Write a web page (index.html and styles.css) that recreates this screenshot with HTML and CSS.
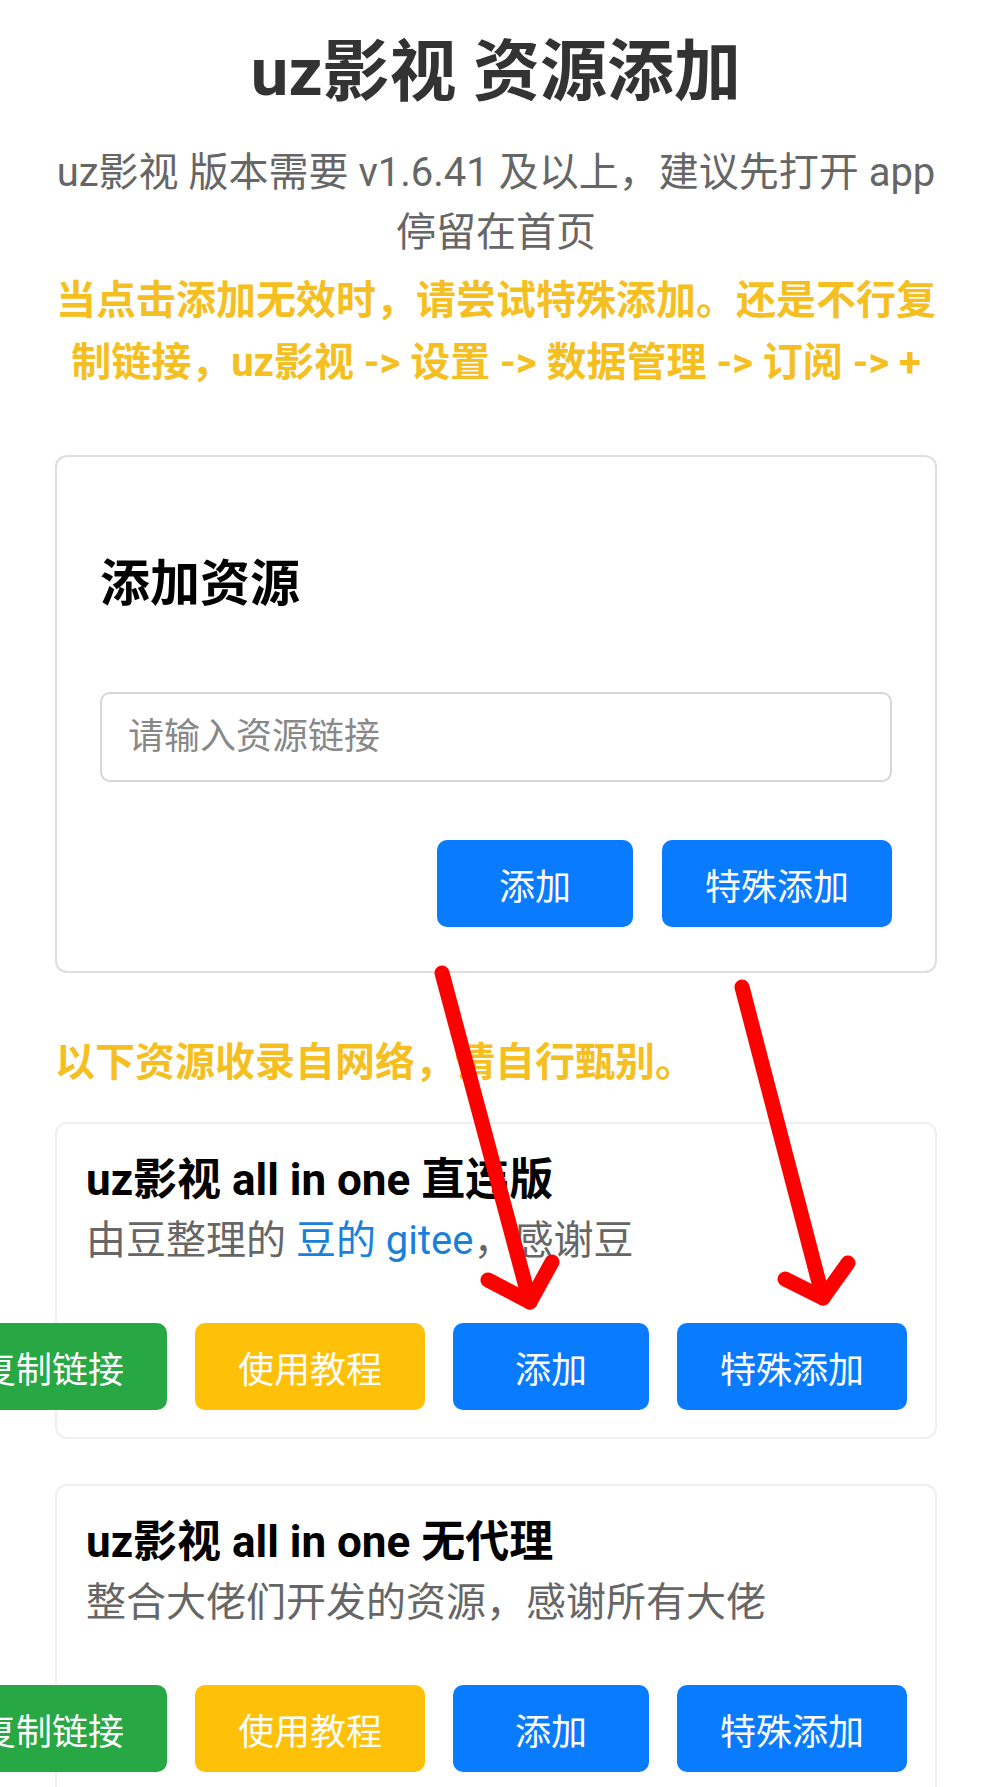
FILE: index.html
```html
<!DOCTYPE html>
<html lang="zh-CN">
<head>
<meta charset="utf-8">
<title>uz影视 资源添加</title>
<link rel="stylesheet" href="styles.css">
</head>
<body>
<div class="page">
  <h1 class="title">uz影视 资源添加</h1>
  <p class="sub">uz影视 版本需要 v1.6.41 及以上，建议先打开 app 停留在首页</p>
  <p class="warn">当点击添加无效时，请尝试特殊添加。还是不行复制链接，uz影视 -&gt; 设置 -&gt; 数据管理 -&gt; 订阅 -&gt; +</p>

  <div class="card add-card">
    <h2 class="add-title">添加资源</h2>
    <input class="url-input" type="text" placeholder="请输入资源链接">
    <div class="actions">
      <button class="btn btn-blue">添加</button>
      <button class="btn btn-blue">特殊添加</button>
    </div>
  </div>

  <p class="note">以下资源收录自网络，请自行甄别。</p>

  <div class="card res-card">
    <h3 class="res-title">uz影视 all in one 直连版</h3>
    <p class="res-desc">由豆整理的 <a class="link" href="#">豆的 gitee</a>，感谢豆</p>
    <div class="actions">
      <button class="btn btn-green">复制链接</button>
      <button class="btn btn-yellow">使用教程</button>
      <button class="btn btn-blue">添加</button>
      <button class="btn btn-blue">特殊添加</button>
    </div>
  </div>

  <div class="card res-card">
    <h3 class="res-title">uz影视 all in one 无代理</h3>
    <p class="res-desc">整合大佬们开发的资源，感谢所有大佬</p>
    <div class="actions">
      <button class="btn btn-green">复制链接</button>
      <button class="btn btn-yellow">使用教程</button>
      <button class="btn btn-blue">添加</button>
      <button class="btn btn-blue">特殊添加</button>
    </div>
  </div>
</div>

<svg class="arrows" width="992" height="1787" viewBox="0 0 992 1787" aria-hidden="true">
  <g fill="none" stroke="#ff0000" stroke-width="15" stroke-linecap="round" stroke-linejoin="round">
    <line x1="442" y1="973" x2="530" y2="1302"/>
    <polyline points="488,1280 530,1302 552,1262"/>
    <line x1="742" y1="987" x2="823" y2="1298"/>
    <polyline points="785,1279 823,1298 848,1263"/>
  </g>
</svg>
</body>
</html>
```

FILE: styles.css
```css
html, body {
  margin: 0;
  padding: 0;
  background: #ffffff;
}

body {
  position: relative;
  font-family: Roboto, "Noto Sans CJK SC", sans-serif;
  color: #333;
  overflow-x: hidden;
}

.page {
  width: 882px;
  margin: 0 auto;
  padding-top: 32px;
  padding-bottom: 40px;
}

.title {
  margin: 0;
  font-size: 67px;
  line-height: 80px;
  font-weight: 700;
  text-align: center;
  color: #333;
}

.sub {
  margin: 31px 0 0;
  font-size: 40px;
  line-height: 60px;
  text-align: center;
  color: #666;
}

.warn {
  margin: 7px 0 0;
  font-size: 40px;
  line-height: 62px;
  font-weight: 700;
  text-align: center;
  color: #f5bf22;
}

.card {
  background: #fff;
  border-radius: 12px;
  box-sizing: border-box;
}

.add-card {
  margin-top: 61px;
  border: 2px solid #dedede;
  padding: 0 43px 44px;
}

.add-title {
  margin: 97px 0 0;
  font-size: 50px;
  line-height: 60px;
  font-weight: 700;
  color: #000;
}

.url-input {
  display: block;
  box-sizing: border-box;
  width: 100%;
  height: 90px;
  margin-top: 78px;
  padding: 0 26px;
  border: 2px solid #d6d6d6;
  border-radius: 10px;
  font-family: Roboto, "Noto Sans CJK SC", sans-serif;
  font-size: 36px;
  color: #333;
  background: #fff;
  outline: none;
}

.url-input::placeholder {
  color: #888;
}

.actions {
  display: flex;
  justify-content: flex-end;
  gap: 29px;
}

.add-card .actions {
  margin-top: 58px;
}

.btn {
  flex-shrink: 0;
  height: 87px;
  min-width: 196px;
  padding: 0 43px;
  border: none;
  border-radius: 10px;
  font-family: Roboto, "Noto Sans CJK SC", sans-serif;
  font-size: 36px;
  color: #fff;
  box-sizing: border-box;
}

.btn-blue { background: #087bff; }
.btn-green { background: #28a745; }
.btn-yellow { background: #ffc107; }

.note {
  margin: 60px 0 0;
  font-size: 40px;
  line-height: 60px;
  font-weight: 700;
  color: #f5bf22;
}

.res-card {
  margin-top: 29px;
  border: 2px solid #efefef;
  padding: 29px 28px 27px 29px;
}

.res-card + .res-card {
  margin-top: 45px;
}

.res-title {
  margin: 0;
  font-size: 44px;
  line-height: 54px;
  font-weight: 700;
  color: #000;
}

.res-desc {
  margin: 4px 0 0;
  font-size: 40px;
  line-height: 60px;
  color: #666;
}

.link {
  color: #1a7fd8;
  text-decoration: none;
}

.res-card .actions {
  margin-top: 52px;
  gap: 28px;
}

.arrows {
  position: absolute;
  left: 0;
  top: 0;
  pointer-events: none;
}
```
